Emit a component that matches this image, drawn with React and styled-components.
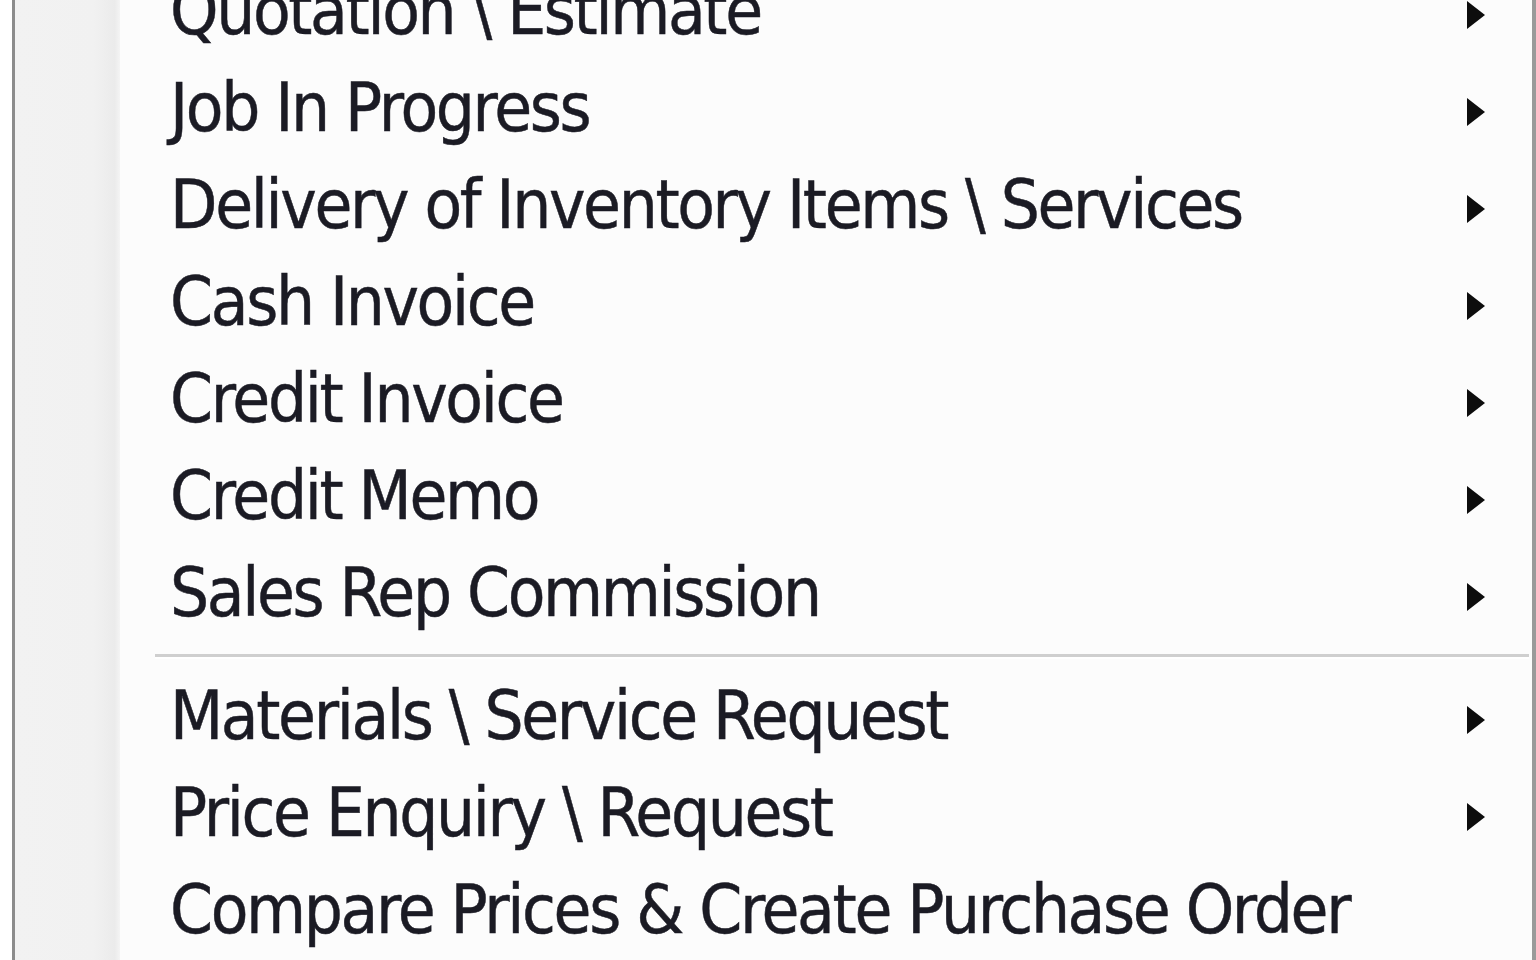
import React from "react";
import styled, { createGlobalStyle } from "styled-components";

const Global = createGlobalStyle`
  html, body { margin: 0; padding: 0; background: #ffffff; overflow: hidden; }
  #root { width: 1536px; height: 960px; overflow: hidden; }
`;

const Stage = styled.div`
  width: 1536px;
  height: 960px;
  overflow: hidden;
  background: #ffffff;
  padding-left: 12px;
  box-sizing: border-box;
`;

const Menu = styled.div`
  display: grid;
  grid-template-columns: 105px 1fr;
  margin-top: -38px;
  border-left: 3px solid #8c8c8c;
  border-right: 4px solid #9a9a9a;
  background: #fcfcfc;
  min-height: 1100px;
  box-sizing: border-box;
`;

const Gutter = styled.div`
  background: linear-gradient(to right, #f2f2f2 0%, #f1f1f1 75%, #ebebeb 95%, #f4f4f4 100%);
`;

const List = styled.ul`
  list-style: none;
  margin: 0;
  padding: 0;
  display: flex;
  flex-direction: column;
`;

const Item = styled.li`
  display: flex;
  align-items: center;
  justify-content: space-between;
  height: 97px;
  padding-left: 50px;
  padding-right: 46px;
  font-family: "DejaVu Sans", Tahoma, Verdana, sans-serif;
  font-size: 68px;
  letter-spacing: -2.6px;
  color: #1b1b24;
  -webkit-text-stroke: 0.5px #1b1b24;
  white-space: nowrap;
`;

const Label = styled.span`
  transform: scaleX(0.907);
  transform-origin: left center;
  display: inline-block;
`;

const ArrowBox = styled.svg`
  flex: none;
  margin-top: 8px;
`;

const Separator = styled.li`
  height: 26px;
  display: flex;
  align-items: flex-start;
  padding-left: 35px;
  padding-right: 3px;
  &::before {
    content: "";
    flex: 1;
    margin-top: 13px;
    height: 3px;
    background: #cfcfcf;
    box-shadow: 0 2px 0 #ffffff;
  }
`;

const Arrow = () => (
  <ArrowBox width="20" height="30" viewBox="0 0 20 30" aria-hidden="true">
    <path d="M1 1 L19 15 L1 29 Z" fill="#0d0d0d" />
  </ArrowBox>
);

const groups = [
  [
    ["Quotation \\ Estimate", true],
    ["Job In Progress", true],
    ["Delivery of Inventory Items \\ Services", true],
    ["Cash Invoice", true],
    ["Credit Invoice", true],
    ["Credit Memo", true],
    ["Sales Rep Commission", true],
  ],
  [
    ["Materials \\ Service Request", true],
    ["Price Enquiry \\ Request", true],
    ["Compare Prices & Create Purchase Order", false],
  ],
];

export default function App() {
  return (
    <>
      <Global />
      <Stage>
        <Menu>
          <Gutter />
          <List>
            {groups.map((g, gi) => (
              <React.Fragment key={gi}>
                {gi > 0 && <Separator />}
                {g.map(([label, sub]) => (
                  <Item key={label}>
                    <Label>{label}</Label>
                    {sub && <Arrow />}
                  </Item>
                ))}
              </React.Fragment>
            ))}
          </List>
        </Menu>
      </Stage>
    </>
  );
}
